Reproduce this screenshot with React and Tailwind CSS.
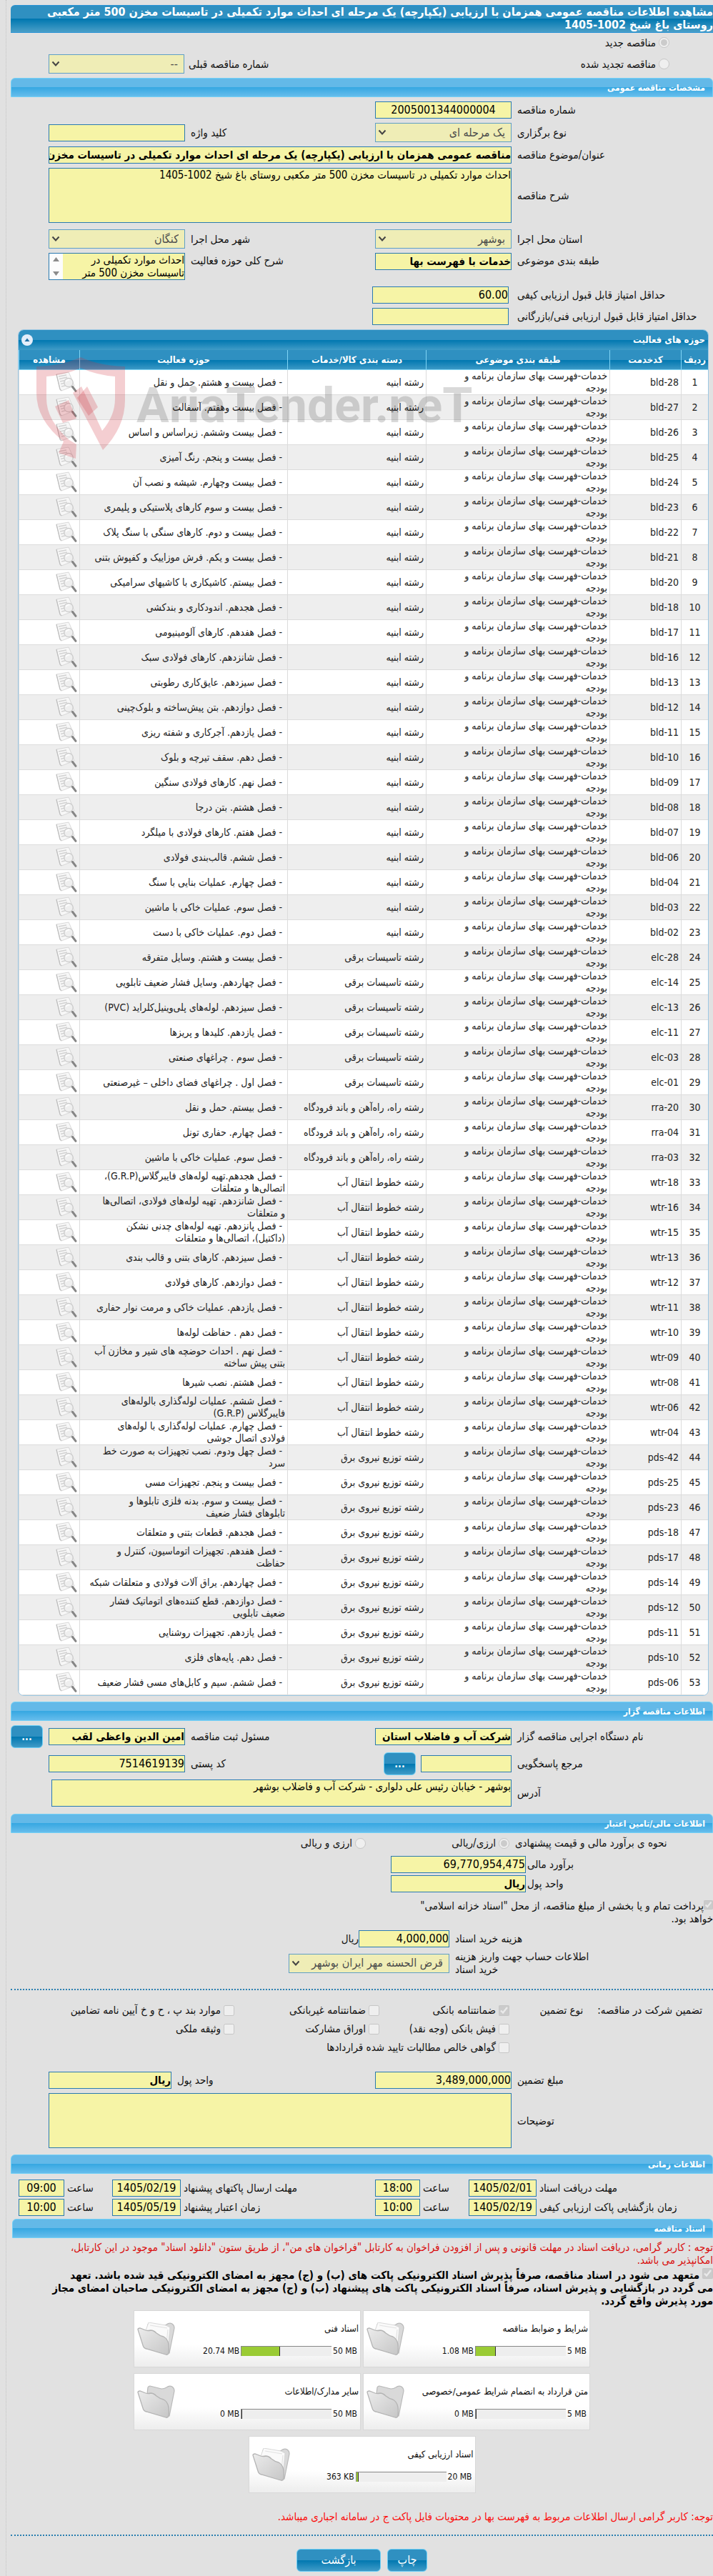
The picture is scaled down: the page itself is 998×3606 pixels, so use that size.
import React from "react";

const SUBJECT = "خدمات-فهرست بهای سازمان برنامه و بودجه";
const BLD = "رشته ابنیه";
const ELC = "رشته تاسیسات برقی";
const RRA = "رشته راه، راه‌آهن و باند فرودگاه";
const WTR = "رشته خطوط انتقال آب";
const PDS = "رشته توزیع نیروی برق";

const ROWS = [
  ["bld-28", BLD, "فصل بیست و هشتم. حمل و نقل"],
  ["bld-27", BLD, "فصل بیست وهفتم. آسفالت"],
  ["bld-26", BLD, "فصل بیست وششم. زیراساس و اساس"],
  ["bld-25", BLD, "فصل بیست و پنجم. رنگ آمیزی"],
  ["bld-24", BLD, "فصل بیست وچهارم. شیشه و نصب آن"],
  ["bld-23", BLD, "فصل بیست و سوم کارهای پلاستیکی و پلیمری"],
  ["bld-22", BLD, "فصل بیست و دوم. کارهای سنگی با سنگ پلاک"],
  ["bld-21", BLD, "فصل بیست و یکم. فرش موزاییک و کفپوش بتنی"],
  ["bld-20", BLD, "فصل بیستم. کاشیکاری با کاشیهای سرامیکی"],
  ["bld-18", BLD, "فصل هجدهم. اندودکاری و بندکشی"],
  ["bld-17", BLD, "فصل هفدهم. کارهای آلومینیومی"],
  ["bld-16", BLD, "فصل شانزدهم. کارهای فولادی سبک"],
  ["bld-13", BLD, "فصل سیزدهم. عایق‌کاری رطوبتی"],
  ["bld-12", BLD, "فصل دوازدهم. بتن پیش‌ساخته و بلوک‌چینی"],
  ["bld-11", BLD, "فصل یازدهم. آجرکاری و شفته ریزی"],
  ["bld-10", BLD, "فصل دهم. سقف تیرچه و بلوک"],
  ["bld-09", BLD, "فصل نهم. کارهای فولادی سنگین"],
  ["bld-08", BLD, "فصل هشتم. بتن درجا"],
  ["bld-07", BLD, "فصل هفتم. کارهای فولادی با میلگرد"],
  ["bld-06", BLD, "فصل ششم. قالب‌بندی فولادی"],
  ["bld-04", BLD, "فصل چهارم. عملیات بنایی با سنگ"],
  ["bld-03", BLD, "فصل سوم. عملیات خاکی با ماشین"],
  ["bld-02", BLD, "فصل دوم. عملیات خاکی با دست"],
  ["elc-28", ELC, "فصل بیست و هشتم. وسایل متفرقه"],
  ["elc-14", ELC, "فصل چهاردهم. وسایل فشار ضعیف تابلویی"],
  ["elc-13", ELC, "فصل سیزدهم. لوله‌های پلی‌وینیل‌کلراید (PVC)"],
  ["elc-11", ELC, "فصل یازدهم. کلیدها و پریزها"],
  ["elc-03", ELC, "فصل سوم . چراغهای صنعتی"],
  ["elc-01", ELC, "فصل اول . چراغهای فضای داخلی – غیرصنعتی"],
  ["rra-20", RRA, "فصل بیستم. حمل و نقل"],
  ["rra-04", RRA, "فصل چهارم. حفاری تونل"],
  ["rra-03", RRA, "فصل سوم. عملیات خاکی با ماشین"],
  ["wtr-18", WTR, "فصل هجدهم.تهیه لوله‌های فایبرگلاس(G.R.P)، اتصالی‌ها و متعلقات"],
  ["wtr-16", WTR, "فصل شانزدهم. تهیه لوله‌های فولادی، اتصالی‌ها و\u00a0متعلقات"],
  ["wtr-15", WTR, "فصل پانزدهم. تهیه لوله‌های چدنی نشکن (داکتیل)،\u00a0اتصالی‌ها و متعلقات"],
  ["wtr-13", WTR, "فصل سیزدهم. کارهای بتنی و قالب بندی"],
  ["wtr-12", WTR, "فصل دوازدهم. کارهای فولادی"],
  ["wtr-11", WTR, "فصل یازدهم. عملیات خاکی و مرمت نوار حفاری"],
  ["wtr-10", WTR, "فصل دهم . حفاظت لوله‌ها"],
  ["wtr-09", WTR, "فصل نهم . احداث حوضچه های شیر و مخازن آب بتنی پیش ساخته"],
  ["wtr-08", WTR, "فصل هشتم. نصب شیرها"],
  ["wtr-06", WTR, "فصل ششم. عملیات لوله‌گذاری بالوله‌های فایبرگلاس (G.R.P)"],
  ["wtr-04", WTR, "فصل چهارم. عملیات لوله‌گذاری با لوله‌های فولادی\u00a0اتصال جوشی"],
  ["pds-42", PDS, "فصل چهل ودوم. نصب تجهیزات به صورت خط سرد"],
  ["pds-25", PDS, "فصل بیست و پنجم. تجهیزات مسی"],
  ["pds-23", PDS, "فصل بیست و سوم. بدنه فلزی تابلوها و تابلوهای\u00a0فشار ضعیف"],
  ["pds-18", PDS, "فصل هجدهم. قطعات بتنی و متعلقات"],
  ["pds-17", PDS, "فصل هفدهم. تجهیزات اتوماسیون، کنترل و حفاظت"],
  ["pds-14", PDS, "فصل چهاردهم. یراق آلات فولادی و متعلقات شبکه"],
  ["pds-12", PDS, "فصل دوازدهم. قطع کننده‌های اتوماتیک فشار ضعیف تابلویی"],
  ["pds-11", PDS, "فصل یازدهم. تجهیزات روشنایی"],
  ["pds-10", PDS, "فصل دهم. پایه‌های فلزی"],
  ["pds-06", PDS, "فصل ششم. سیم و کابل‌های مسی فشار ضعیف"],
];

const BOX = "block w-full min-w-0 border border-[#2a7ab0] bg-[#f6f4a6] p-0 text-black outline-none";
const GRID = "grid grid-cols-[minmax(0,278fr)_minmax(0,195fr)_minmax(0,262fr)_minmax(0,195fr)_minmax(0,53fr)] items-center";
const DARK = "bg-[linear-gradient(#2f90c1_0%,#2f90c1_50%,#0077b0_50%,#3f9bc7_100%)]";

function Label({ id, children, className = "pe-1" }) {
  return (
    <label htmlFor={id} className={"block whitespace-nowrap text-end " + className}>
      {children}
    </label>
  );
}

function Field({ id, value = "", strong, className = "" }) {
  const face = strong ? " h-6 text-[15px] font-bold " : " h-6 text-base ";
  return <input id={id} type="text" readOnly defaultValue={value} className={BOX + face + className} />;
}

function Area({ id, value = "", className = "" }) {
  return <textarea id={id} readOnly defaultValue={value} className={BOX + " resize-none overflow-hidden text-[15px] leading-[18px] " + className} />;
}

function Select({ id, value, className = "" }) {
  return (
    <div className={"relative " + className}>
      <select
        id={id}
        disabled
        className="block h-[27px] w-full appearance-none border border-[#5f9fc6] bg-[#efedb6] py-0 pe-5 ps-2 text-base text-[#4d4d4d] opacity-100"
      >
        <option>{value}</option>
      </select>
      <svg viewBox="0 0 12 8" className="pointer-events-none absolute left-1 top-[9px] h-2 w-3" fill="none" stroke="#444" strokeWidth="2">
        <path d="M1.500 1.500L6 6.500L10.500 1.500" />
      </svg>
    </div>
  );
}

function Section({ children }) {
  return (
    <h2 className="flex h-[27px] items-center rounded-t-md border border-[#73d0f6] bg-[linear-gradient(#63b9e8_0%,#63b9e8_48%,#37a8e2_50%,#66bdec_100%)] pe-2 ps-2.5 text-xs font-bold text-white">
      {children}
    </h2>
  );
}

function MoreButton({ label }) {
  return (
    <button type="button" aria-label={label} className={"h-8 w-[45px] shrink-0 rounded-md border border-[#6ccff7] text-sm font-bold text-white " + DARK}>
      ...
    </button>
  );
}

function Check({ id, checked, type = "checkbox", name, children, className = "" }) {
  return (
    <div className={"flex items-center gap-1 " + className}>
      <input id={id} name={name} type={type} disabled defaultChecked={checked} className="size-[15px] shrink-0" />
      <label htmlFor={id} className="whitespace-nowrap">{children}</label>
    </div>
  );
}

function PageSearchIcon() {
  return (
    <svg viewBox="0 0 30 30" className="size-[30px]">
      <path d="M1 4L18 1L20 5L26 20L8 27L6 25Z" fill="#f7f7f7" stroke="#cfcfcf" strokeWidth="0.8" />
      <path d="M1 4L6 25L8 27" fill="none" stroke="#bdbdbd" strokeWidth="1.200" />
      <path d="M4 7L15 5M5 10.500L16 8M6 14L12 12.700M7 17.500L12 16.300M8 21L13 20" stroke="#d2d2d2" strokeWidth="1.600" />
      <circle cx="18" cy="15.500" r="6.200" fill="#ededed" fillOpacity="0.85" stroke="#cbcbcb" strokeWidth="1.300" />
      <path d="M14.500 14.500a4 4 0 0 1 5-2.500" stroke="#fff" strokeWidth="1.400" fill="none" />
      <path d="M23.500 21.500L28 27.300" stroke="#858585" strokeWidth="3" strokeLinecap="round" />
    </svg>
  );
}

function FolderIcon({ full }) {
  return (
    <svg viewBox="0 0 54 48" className="h-12 w-[54px]">
      <defs>
        <linearGradient id="folderFront" x1="0" y1="0" x2="1" y2="1">
          <stop offset="0" stopColor="#ececec" />
          <stop offset="1" stopColor="#c6c6c6" />
        </linearGradient>
      </defs>
      <path d="M15 3Q16 1 18 1L34 5Q38 5 41 3Q45 0 49 2Q52 4 52 8L45 43L12 30Z" fill="#d9d9d9" stroke="#b9b9b9" strokeWidth="1.200" />
      {full && <path d="M12 11L16 0L40 4L46 7L43 38L20 26Z" fill="#fafafa" stroke="#d4d4d4" strokeWidth="0.900" />}
      {full && <path d="M18 4L42 8M43 10L41 30" fill="none" stroke="#e2e2e2" strokeWidth="1.200" />}
      <path d="M1 10Q1 8 4 8L12 11Q15 12 19 11Q23 11 27 15Q32 19 37 20Q41 22 43 27Q45 32 44 43Q43 46 40 45L13 37Q9 36 8 32Z" fill="url(#folderFront)" stroke="#b4b4b4" strokeWidth="1.300" />
    </svg>
  );
}

function DocCard({ title, max, used, fill, full }) {
  return (
    <div className="flex h-20 w-[318px] items-start justify-between border border-[#d8d8d8] bg-[linear-gradient(#ffffff_60%,#ededed_100%)] pb-1 pe-1 ps-0.5 pt-4">
      <div className="flex flex-1 flex-col gap-[14px]">
        <div className="h-[18px] whitespace-nowrap text-[13px] leading-[18px]">{title}</div>
        <div className="flex items-center gap-0.5 ps-0.5 text-xs">
          <span dir="ltr" className="whitespace-nowrap">{max}</span>
          <div dir="ltr" className="flex h-[14px] w-[127px] border-l border-t border-[#888] bg-[#eeeeee]">
            <div className="h-full border-r border-[#333] bg-[#9acb34]" style={{ width: `${fill}%` }} />
          </div>
          <span dir="ltr" className="whitespace-nowrap">{used}</span>
        </div>
      </div>
      <div className="-ms-16 shrink-0"><FolderIcon full={full} /></div>
    </div>
  );
}

function Watermark() {
  return (
    <div dir="ltr" className="pointer-events-none absolute left-[25px] top-[38px] flex items-start">
      <svg viewBox="0 0 124 142" className="h-[142px] w-[124px] shrink-0" fill="#d0343f" fillOpacity="0.24">
        <path fillRule="evenodd" d="M0 13Q36 12 62 0Q88 12 124 13V60Q124 98 93 130L51 50L63 41L92 103Q110 82 110 58V27Q84 25 62 15Q40 25 14 27V58Q14 88 46 116L56 122L55 142L31 134L38 118Q0 88 0 50Z" />
        <path d="M57 57L71 41L86 70L73 82Z" />
        <path d="M26 69L45 60L56 86L37 92Z" />
      </svg>
      <span className="ms-4 mt-5 font-['Roboto'] text-[68px] font-bold leading-[96px] text-black/15">
        AriaTender.neT
      </span>
    </div>
  );
}

function ActivityTable() {
  const th = "border-b border-l border-[#7fd4f5] p-0 text-center text-[13px] font-bold";
  const td = "border-b border-l border-[#dcdcdc] py-0 ";
  return (
    <section className="relative ms-1.5 me-2.5 mt-1.5 overflow-hidden rounded-lg border border-[#9cc8e4] bg-white">
      <div className={"flex h-7 items-center justify-between ps-1 pe-1 text-white " + DARK}>
        <h3 className="text-[13px] font-bold">حوزه های فعالیت</h3>
        <button type="button" aria-label="بستن" className="flex size-4 items-center justify-center rounded-full bg-[#e4eefa]">
          <svg viewBox="0 0 8 8" className="size-2"><path d="M4 1.500L7.500 6H0.500Z" fill="#1f6fa5" /></svg>
        </button>
      </div>
      <table className="w-full table-fixed border-separate border-spacing-0 text-sm leading-[17px] text-[#222]">
        <colgroup>
          <col className="w-[38px]" />
          <col className="w-[100px]" />
          <col className="w-[257px]" />
          <col className="w-[194px]" />
          <col />
          <col className="w-[85px]" />
        </colgroup>
        <thead>
          <tr className={"h-7 text-white " + DARK}>
            <th className={th}>ردیف</th>
            <th className={th}>کدخدمت</th>
            <th className={th}>طبقه بندی موضوعی</th>
            <th className={th}>دسته بندی کالا/خدمات</th>
            <th className={th}>حوزه فعالیت</th>
            <th className={th}>مشاهده</th>
          </tr>
        </thead>
        <tbody>
          {ROWS.map(([code, category, activity], i) => (
            <tr key={code} className="h-[35px] even:bg-[#eeeeee]">
              <td className={td + "px-[3px] text-center"}>{i + 1}</td>
              <td className={td + "px-[3px]"}><bdi>{code}</bdi></td>
              <td className={td + "px-[3px]"}><div className="max-w-[225px]">{SUBJECT}</div></td>
              <td className={td + "whitespace-nowrap px-[3px]"}>{category}</td>
              <td className={td + "pe-3 ps-[3px]"}>&nbsp;- {activity}</td>
              <td className={td + "px-[3px]"}>
                <a href="#view" aria-label={"مشاهده " + code} className="block w-[30px]"><PageSearchIcon /></a>
              </td>
            </tr>
          ))}
        </tbody>
      </table>
      <Watermark />
    </section>
  );
}

const TIME_GRID = "grid grid-cols-[minmax(0,247fr)_minmax(0,95fr)_minmax(0,68fr)_minmax(0,63fr)_minmax(0,272fr)_minmax(0,96fr)_minmax(0,67fr)_minmax(0,64fr)_minmax(0,11fr)] items-center";

function TimeRow({ n, a, b }) {
  return (
    <div className={TIME_GRID}>
      <Label id={`d${n}a`}>{a[0]}</Label>
      <Field id={`d${n}a`} value={a[1]} className="text-center" />
      <Label id={`t${n}a`}>ساعت</Label>
      <Field id={`t${n}a`} value={a[2]} className="text-center" />
      <Label id={`d${n}b`}>{b[0]}</Label>
      <Field id={`d${n}b`} value={b[1]} className="text-center" />
      <Label id={`t${n}b`}>ساعت</Label>
      <Field id={`t${n}b`} value={b[2]} className="text-center" />
    </div>
  );
}

export default function App() {
  return (
    <div dir="rtl" lang="fa" className="min-h-screen bg-[#e1e1e1] pl-2 font-['DejaVu_Sans_Condensed','DejaVu_Sans',sans-serif] text-[15px] leading-[18px] text-[#111]">
      <main className="border-l border-dotted border-[#c4c4c4] pb-1.5 pl-1.5 pt-[7px]">
        <h1 className="rounded-tl-md border-b border-t border-[#2a93d5] bg-[linear-gradient(#2f90c1_0%,#2f90c1_50%,#0077b0_50%,#4a9fc8_100%)] pe-10 pb-px text-base font-bold leading-[18px] text-white">
          مشاهده اطلاعات مناقصه عمومی همزمان با ارزیابی (یکپارچه) یک مرحله ای احداث موارد تکمیلی در تاسیسات مخزن 500 متر مکعبی روستای باغ شیخ 1002-1405
        </h1>

        <div className="pb-[3px] ps-[61px]">
          <div className="flex h-[27px] items-center">
            <Check id="new" type="radio" name="kind" checked>مناقصه جدید</Check>
          </div>
          <div className="flex h-[33px] items-center justify-between pe-[53px]">
            <Check id="renewed" type="radio" name="kind">مناقصه تجدید شده</Check>
            <div className="flex items-center gap-1.5">
              <label htmlFor="prev">شماره مناقصه قبلی</label>
              <Select id="prev" value="--" className="w-[190px]" />
            </div>
          </div>
        </div>

        <Section>مشخصات مناقصه عمومی</Section>
        <div className="flex flex-col gap-1.5 pt-1.5">
          <div className={GRID}>
            <Label id="no">شماره مناقصه</Label>
            <div className="ps-1"><Field id="no" value="2005001344000004" className="text-center" /></div>
          </div>
          <div className={GRID}>
            <Label id="type">نوع برگزاری</Label>
            <div className="ps-1"><Select id="type" value="یک مرحله ای" /></div>
            <Label id="keyword">کلید واژه</Label>
            <div className="ps-1"><Field id="keyword" /></div>
          </div>
          <div className={GRID}>
            <Label id="title">عنوان/موضوع مناقصه</Label>
            <div className="col-span-3 ps-1">
              <Field id="title" strong value="مناقصه عمومی همزمان با ارزیابی (یکپارچه) یک مرحله ای احداث موارد تکمیلی در تاسیسات مخزن 500 متر مکعبی روستای باغ شیخ 1002-1405" />
            </div>
          </div>
          <div className={GRID}>
            <Label id="desc">شرح مناقصه</Label>
            <div className="col-span-3 ps-1">
              <Area id="desc" className="h-[77px]" value="احداث موارد تکمیلی در تاسیسات مخزن 500 متر مکعبی روستای باغ شیخ 1002-1405" />
            </div>
          </div>
          <div className={GRID + " pt-[3px]"}>
            <Label id="province">استان محل اجرا</Label>
            <div className="ps-1"><Select id="province" value="بوشهر" /></div>
            <Label id="city">شهر محل اجرا</Label>
            <div className="ps-1"><Select id="city" value="کنگان" /></div>
          </div>
          <div className={GRID}>
            <Label id="class" className="self-start pe-1 pt-0.5">طبقه بندی موضوعی</Label>
            <div className="self-start ps-1"><Field id="class" strong value="خدمات با فهرست بها" /></div>
            <Label id="scope" className="self-start pe-1 pt-0.5">شرح کلی حوزه فعالیت</Label>
            <div className="relative ps-1">
              <Area id="scope" className="h-[38px] pe-5" value="احداث موارد تکمیلی در تاسیسات مخزن 500 متر مکعبی" />
              <svg viewBox="0 0 19 36" className="absolute left-px top-px h-9 w-[19px] bg-[#fcfcfc]" fill="#8b8b8b">
                <path d="M9.500 5L14 11H5ZM9.500 31L14 25H5Z" />
              </svg>
            </div>
          </div>
          <div className={GRID + " pt-[3px]"}>
            <Label id="minq">حداقل امتیاز قابل قبول ارزیابی کیفی</Label>
            <div className="-me-1 ps-2"><Field id="minq" value="60.00" /></div>
          </div>
          <div className={GRID}>
            <Label id="mint">حداقل امتیاز قابل قبول ارزیابی فنی/بازرگانی</Label>
            <div className="-me-1 ps-2"><Field id="mint" /></div>
          </div>
        </div>

        <ActivityTable />

        <div className="pt-2"><Section>اطلاعات مناقصه گزار</Section></div>
        <div className="flex flex-col gap-1.5 pb-2.5 pt-1.5">
          <div className={GRID}>
            <Label id="org">نام دستگاه اجرایی مناقصه گزار</Label>
            <div className="ps-1"><Field id="org" strong value="شرکت آب و فاضلاب استان" /></div>
            <Label id="person">مسئول ثبت مناقصه</Label>
            <div className="ps-1"><Field id="person" strong value="امین الدین واعظی لقب" /></div>
            <div className="flex justify-end"><MoreButton label="جزئیات مسئول" /></div>
          </div>
          <div className={GRID}>
            <Label id="ref">مرجع پاسخگویی</Label>
            <div className="flex items-center gap-[7px] ps-1">
              <Field id="ref" className="max-w-[127px]" />
              <MoreButton label="انتخاب مرجع" />
            </div>
            <Label id="postal">کد پستی</Label>
            <div className="ps-1"><Field id="postal" value="7514619139" /></div>
          </div>
          <div className={GRID}>
            <Label id="addr">آدرس</Label>
            <div className="col-span-3 pe-1 ps-1">
              <Area id="addr" className="h-[38px]" value="بوشهر - خیابان رئیس علی دلواری - شرکت آب و فاضلاب بوشهر" />
            </div>
          </div>
        </div>

        <Section>اطلاعات مالی/تامین اعتبار</Section>
        <div className="grid h-7 grid-cols-[minmax(0,285fr)_minmax(0,201fr)_minmax(0,497fr)] items-center">
          <span className="pe-2 text-end">نحوه ی برآورد مالی و قیمت پیشنهادی</span>
          <Check id="cur1" type="radio" name="cur" checked>ارزی/ریالی</Check>
          <Check id="cur2" type="radio" name="cur">ارزی و ریالی</Check>
        </div>
        <div className="flex flex-col gap-[3px] pt-1">
          <div className="grid grid-cols-[minmax(0,262fr)_minmax(0,189fr)_minmax(0,532fr)] items-center">
            <Label id="est" className="pe-0.5">برآورد مالی</Label>
            <Field id="est" value="69,770,954,475" />
          </div>
          <div className="grid grid-cols-[minmax(0,262fr)_minmax(0,189fr)_minmax(0,532fr)] items-center">
            <Label id="unit1" className="pe-0.5">واحد پول</Label>
            <Field id="unit1" strong value="ریال" />
          </div>
        </div>
        <div className="max-w-[450px] pt-2.5">
          <input id="treasury" type="checkbox" disabled defaultChecked className="size-[13px] align-baseline" />
          <label htmlFor="treasury">پرداخت تمام و یا بخشی از مبلغ مناقصه، از محل "اسناد خزانه اسلامی" خواهد&nbsp;بود.</label>
        </div>
        <div className="grid grid-cols-[minmax(0,369fr)_minmax(0,225fr)_minmax(0,389fr)] items-center gap-y-1 pb-[18px] pt-[7px]">
          <Label id="cost" className="pe-2">هزینه خرید اسناد</Label>
          <div className="flex items-center">
            <Field id="cost" value="4,000,000" className="max-w-[127px]" />
            <span>ریال</span>
          </div>
          <span />
          <label htmlFor="account" className="me-2 ms-auto block w-[212px] text-end">اطلاعات حساب جهت واریز هزینه خرید اسناد</label>
          <Select id="account" value="قرض الحسنه مهر ایران بوشهر" />
        </div>
        <div className="border-t-2 border-dotted border-[#2a7fb0]" />

        <div className="grid grid-cols-[minmax(0,285fr)_minmax(0,182fr)_minmax(0,203fr)_minmax(0,313fr)] pb-[21px] pt-[15px]">
          <div className="row-span-3 flex h-[26px] items-center gap-5 whitespace-nowrap ps-[15px]">
            <span>تضمین شرکت در مناقصه:</span>
            <span>نوع تضمین</span>
          </div>
          <Check id="g1" checked className="h-[26px]">ضمانتنامه بانکی</Check>
          <Check id="g2" className="h-[26px]">ضمانتنامه غیربانکی</Check>
          <Check id="g3" className="h-[26px]">موارد بند پ ، ح و خ آیین نامه تضامین</Check>
          <Check id="g4" className="h-[26px]">فیش بانکی (وجه نقد)</Check>
          <Check id="g5" className="h-[26px]">اوراق مشارکت</Check>
          <Check id="g6" className="h-[26px]">وثیقه ملکی</Check>
          <Check id="g7" className="col-span-2 h-[26px]">گواهی خالص مطالبات تایید شده قراردادها</Check>
        </div>
        <div className="flex flex-col gap-1.5 pb-[9px]">
          <div className="grid grid-cols-[minmax(0,278fr)_minmax(0,195fr)_minmax(0,281fr)_minmax(0,176fr)_minmax(0,53fr)] items-center">
            <Label id="gamount">مبلغ تضمین</Label>
            <div className="ps-1"><Field id="gamount" value="3,489,000,000" /></div>
            <Label id="unit2">واحد پول</Label>
            <div className="ps-1"><Field id="unit2" strong value="ریال" /></div>
          </div>
          <div className={GRID}>
            <Label id="notes">توضیحات</Label>
            <div className="col-span-3 ps-1">
              <Area id="notes" className="h-[77px]" />
            </div>
          </div>
        </div>

        <Section>اطلاعات زمانی</Section>
        <div className="flex flex-col gap-[3px] pb-1 pt-2">
          <TimeRow n={1} a={["مهلت دریافت اسناد", "1405/02/01", "18:00"]} b={["مهلت ارسال پاکتهای پیشنهاد", "1405/02/19", "09:00"]} />
          <TimeRow n={2} a={["زمان بازگشایی پاکت ارزیابی کیفی", "1405/02/19", "10:00"]} b={["زمان اعتبار پیشنهاد", "1405/05/19", "10:00"]} />
        </div>

        <div className="pl-0.5"><Section>اسناد مناقصه</Section></div>
        <p className="pt-1 text-[#d90d0d]">
          توجه : کاربر گرامی، دریافت اسناد در مهلت قانونی و پس از افزودن فراخوان به کارتابل "فراخوان های من"، از طریق ستون "دانلود اسناد" موجود در این کارتابل، امکانپذیر&nbsp;می&nbsp;باشد.
        </p>
        <div className="pt-0.5 font-bold text-black">
          <input id="commit" type="checkbox" disabled defaultChecked className="me-1 size-[15px] align-baseline" />
          <label htmlFor="commit">
            متعهد می شود در اسناد مناقصه، صرفاً پذیرش اسناد الکترونیکی پاکت های (ب) و (ج) مجهز به امضای الکترونیکی قید شده باشد. تعهد
            <br />
            می گردد در بازگشایی و پذیرش اسناد، صرفاً اسناد الکترونیکی پاکت های پیشنهاد (ب) و (ج) مجهز به امضای الکترونیکی صاحبان امضای مجاز
            <br />
            مورد پذیرش واقع گردد.
          </label>
        </div>
        <div className="flex flex-col items-center gap-2 pt-1">
          <div className="flex flex-wrap gap-[3px]">
            <DocCard title="شرایط و ضوابط مناقصه" max="5 MB" used="1.08 MB" fill={22} full />
            <DocCard title="اسناد فنی" max="50 MB" used="20.74 MB" fill={43} full />
          </div>
          <div className="flex flex-wrap gap-[3px]">
            <DocCard title="متن قرارداد به انضمام شرایط عمومی/خصوصی" max="5 MB" used="0 MB" fill={1} />
            <DocCard title="سایر مدارک/اطلاعات" max="50 MB" used="0 MB" fill={1} />
          </div>
          <DocCard title="اسناد ارزیابی کیفی" max="20 MB" used="363 KB" fill={3} full />
        </div>
        <p className="pb-4 pt-6 text-[#fb0d0d]">
          توجه: کاربر گرامی ارسال اطلاعات مربوط به فهرست بها در محتویات فایل پاکت ج در سامانه اجباری میباشد.
        </p>
        <div className="border-t-2 border-dotted border-[#2a7fb0]" />
        <div className="flex justify-center gap-[9px] pt-[18px] text-base text-white">
          <button type="button" className={"h-8 w-14 rounded-md border border-[#6ccff7] " + DARK}>چاپ</button>
          <button type="button" className={"h-8 w-[118px] rounded-md border border-[#6ccff7] " + DARK}>بازگشت</button>
        </div>
      </main>
    </div>
  );
}
